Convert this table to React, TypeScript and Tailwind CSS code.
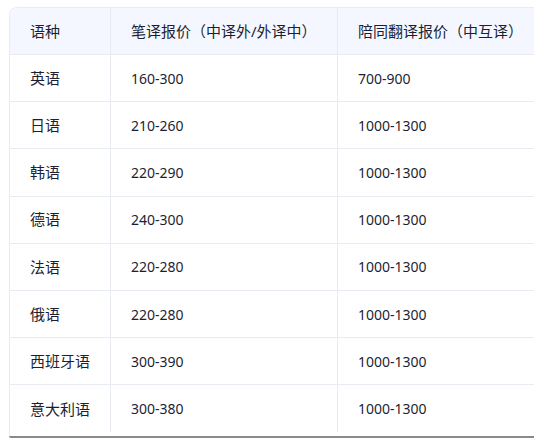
const rows = [
  ["英语", "160-300", "700-900"],
  ["日语", "210-260", "1000-1300"],
  ["韩语", "220-290", "1000-1300"],
  ["德语", "240-300", "1000-1300"],
  ["法语", "220-280", "1000-1300"],
  ["俄语", "220-280", "1000-1300"],
  ["西班牙语", "300-390", "1000-1300"],
  ["意大利语", "300-380", "1000-1300"],
]

const font = { fontFamily: '"Segoe UI", "Noto Sans", "Noto Sans CJK SC", sans-serif' }

function Row({ cells, head, last }: { cells: string[]; head?: boolean; last?: boolean }) {
  const h = head ? "h-[47px] bg-[#f4f7ff] border-b" : last ? "h-[51px] pb-[4px] bg-white" : "h-[47.2px] bg-white border-b"
  return (
    <div className={`flex border-[#e8ebf2] ${h}`}>
      <div className="w-[101px] shrink-0 flex items-center pl-[20px] border-r border-[#e8ebf2] text-[15px]">{cells[0]}</div>
      <div className={`w-[227px] shrink-0 flex items-center pl-[20px] border-r border-[#e8ebf2] ${head ? "text-[15px]" : ""}`}>{cells[1]}</div>
      <div className={`flex-1 flex items-center pl-[20px] ${head ? "text-[15px]" : ""}`}>{cells[2]}</div>
    </div>
  )
}

export default function App() {
  return (
    <div className="w-[534px] h-[438px] overflow-hidden bg-white pl-[9px] pt-[7px]" style={font}>
      <div className="w-[600px] rounded-tl-[8px] border-l border-t border-[#e8ebf2] overflow-hidden text-[14px] text-[#1c1f33]">
        <Row cells={["语种", "笔译报价（中译外/外译中）", "陪同翻译报价（中互译）"]} head />
        {rows.map((r, i) => (
          <Row key={r[0]} cells={r} last={i === rows.length - 1} />
        ))}
      </div>
      <div className="w-[600px] h-[2px] bg-[#8a8a8a] rounded-bl-[4px]" />
    </div>
  )
}
